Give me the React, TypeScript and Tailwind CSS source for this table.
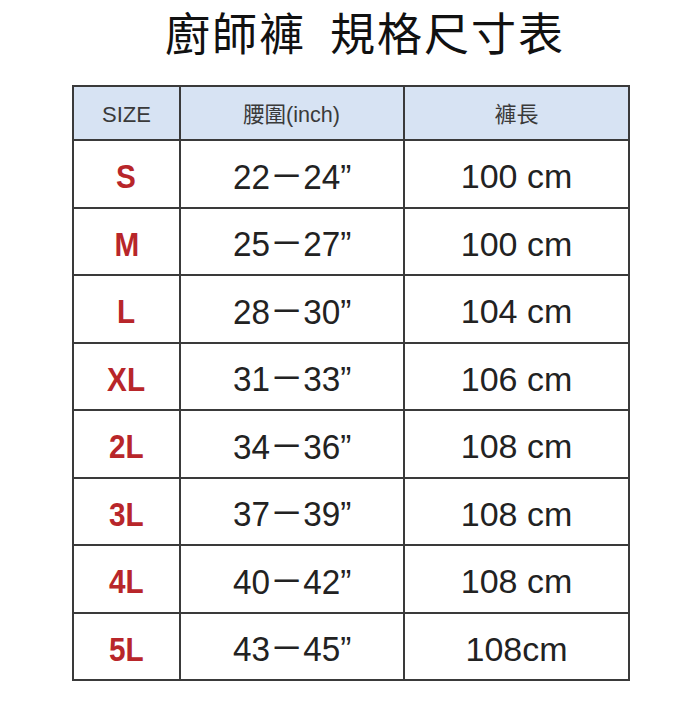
const rows = [
  { size: 'S', waist: '22－24”', length: '100 cm' },
  { size: 'M', waist: '25－27”', length: '100 cm' },
  { size: 'L', waist: '28－30”', length: '104 cm' },
  { size: 'XL', waist: '31－33”', length: '106 cm' },
  { size: '2L', waist: '34－36”', length: '108 cm' },
  { size: '3L', waist: '37－39”', length: '108 cm' },
  { size: '4L', waist: '40－42”', length: '108 cm' },
  { size: '5L', waist: '43－45”', length: '108cm' },
];

export default function App() {
  return (
    <div className="h-[714px] w-[688px] bg-white font-['Liberation_Sans','Noto_Sans_CJK_TC',sans-serif]">
      <h1 className="pl-[42px] text-center font-['Noto_Sans_CJK_TC',sans-serif] text-[45px] leading-[64px] font-normal tracking-[2px] text-[#111]">
        廚師褲&nbsp;&nbsp;規格尺寸表
      </h1>
      <table className="mt-[21px] ml-[72px] w-[556px] table-fixed border-collapse border-2 border-[#3a3a3a]">
        <colgroup>
          <col className="w-[107px]" />
          <col className="w-[224px]" />
          <col className="w-[225px]" />
        </colgroup>
        <thead>
          <tr className="h-[54px] bg-[#d7e3f3] text-[22px] text-[#3a3a3a]">
            <th className="border-2 border-[#3a3a3a] pt-[3px] font-normal">SIZE</th>
            <th className="border-2 border-[#3a3a3a] pt-[3px] font-normal">
              <span className="inline-block scale-x-[0.98]">腰圍(inch)</span>
            </th>
            <th className="border-2 border-[#3a3a3a] pt-[3px] font-normal">褲長</th>
          </tr>
        </thead>
        <tbody>
          {rows.map((r) => (
            <tr key={r.size} className="h-[67.5px]">
              <td className="border-2 border-[#3a3a3a] pt-[6px] text-center">
                <span className="inline-block scale-x-[0.9] text-[33px] font-bold text-[#b8262a]">{r.size}</span>
              </td>
              <td className="border-2 border-[#3a3a3a] pt-[6px] text-center">
                <span className="inline-block scale-x-[0.95] text-[35px] text-[#222]">{r.waist}</span>
              </td>
              <td className="border-2 border-[#3a3a3a] pt-[6px] text-center">
                <span className="inline-block text-[34px] text-[#222]">{r.length}</span>
              </td>
            </tr>
          ))}
        </tbody>
      </table>
    </div>
  );
}
